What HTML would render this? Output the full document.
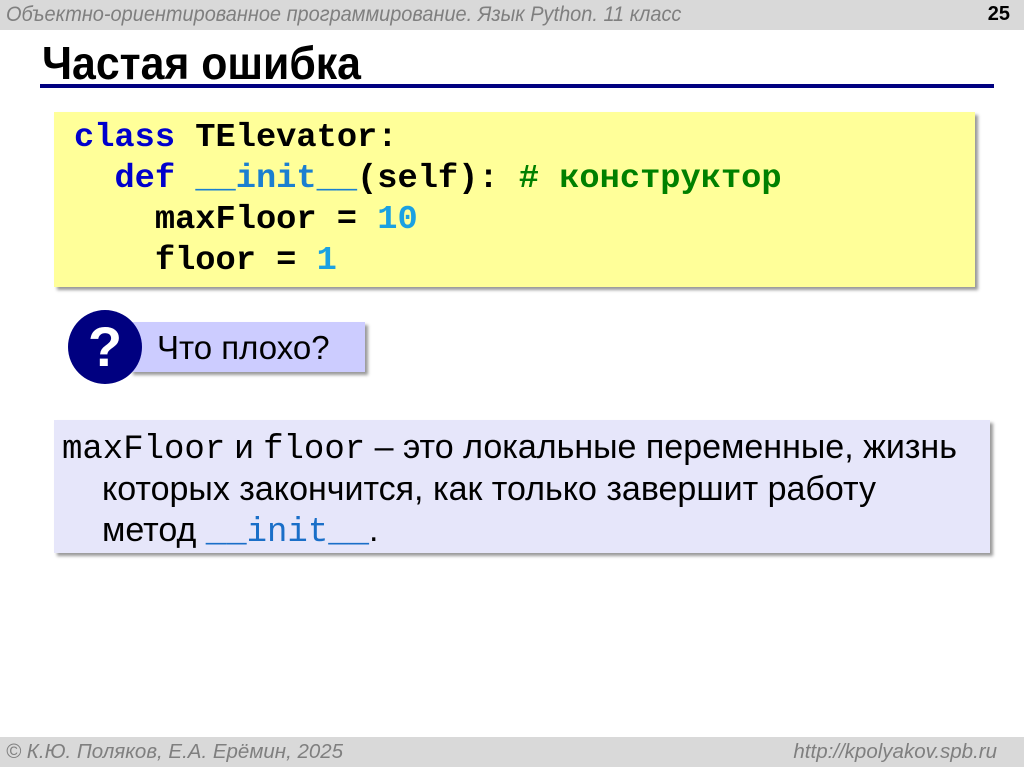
<!DOCTYPE html>
<html><head><meta charset="utf-8"><style>
body{margin:0;width:1024px;height:767px;background:#fff;position:relative;overflow:hidden;font-family:"Liberation Sans",Arial,sans-serif}
.hdr{position:absolute;left:0;top:0;width:1024px;height:30px;background:#d9d9d9}
.hdr .t{position:absolute;left:6px;top:3px;font-size:21px;font-style:italic;color:#7f7f7f;transform:scaleX(.95);transform-origin:left;white-space:nowrap}
.hdr .n{position:absolute;right:14px;top:3px;font-size:20px;font-weight:bold;color:#000}
h1{position:absolute;left:42px;top:36px;margin:0;font-size:46px;font-weight:bold;transform:scaleX(.93);transform-origin:left;white-space:nowrap}
.line{position:absolute;left:40px;top:84px;width:954px;height:4px;background:#000080}
.code{position:absolute;left:54px;top:112px;width:921px;height:175px;background:#ffff99;box-shadow:3px 3px 3px #999}
.mono{font-family:"Liberation Mono","Courier New",monospace}
pre{margin:0;position:absolute;left:20px;top:6px;font-family:"Liberation Mono","Courier New",monospace;font-size:33.7px;font-weight:bold;line-height:41px;color:#000}
.k{color:#0000cc}.f{color:#1a7fd0}.c{color:#008000}.num{color:#1ba1e2}
.circle{position:absolute;left:68px;top:310px;width:74px;height:74px;border-radius:50%;background:#000080;z-index:2;color:#fff;font-size:56px;font-weight:bold;text-align:center;line-height:74px}
.q{position:absolute;left:130px;top:322px;width:235px;height:50px;background:#ccccff;box-shadow:3px 3px 3px #999;font-size:33px;line-height:52px;padding-left:27px;box-sizing:border-box;white-space:nowrap}
.box{position:absolute;left:54px;top:420px;width:936px;height:133px;background:#e6e6fa;box-shadow:3px 3px 3px #999;font-size:34px;line-height:42px}
.box div{position:absolute;white-space:nowrap}
.u{color:#1a6fc8}
.ftr{position:absolute;left:0;top:737px;width:1024px;height:30px;background:#d9d9d9;font-size:20.5px;font-style:italic;color:#7f7f7f}
.ftr span{position:absolute;top:3px;white-space:nowrap}
</style></head><body>
<div class="hdr"><span class="t">Объектно-ориентированное программирование. Язык Python. 11 класс</span><span class="n">25</span></div>
<h1>Частая ошибка</h1>
<div class="line"></div>
<div class="code"><pre><span class="k">class</span> TElevator:
  <span class="k">def</span> <span class="f">__init__</span>(self): <span class="c"># конструктор</span>
    maxFloor = <span class="num">10</span>
    floor = <span class="num">1</span></pre></div>
<div class="circle">?</div>
<div class="q">Что плохо?</div>
<div class="box">
<div style="left:8px;top:6px"><span class="mono">maxFloor</span> и <span class="mono">floor</span> – это локальные переменные, жизнь</div>
<div style="left:48px;top:48px">которых закончится, как только завершит работу</div>
<div style="left:48px;top:89px">метод <span class="mono u">__init__</span>.</div>
</div>
<div class="ftr"><span style="left:6px">© К.Ю. Поляков, Е.А. Ерёмин, 2025</span><span style="right:27px">http://kpolyakov.spb.ru</span></div>
</body></html>
